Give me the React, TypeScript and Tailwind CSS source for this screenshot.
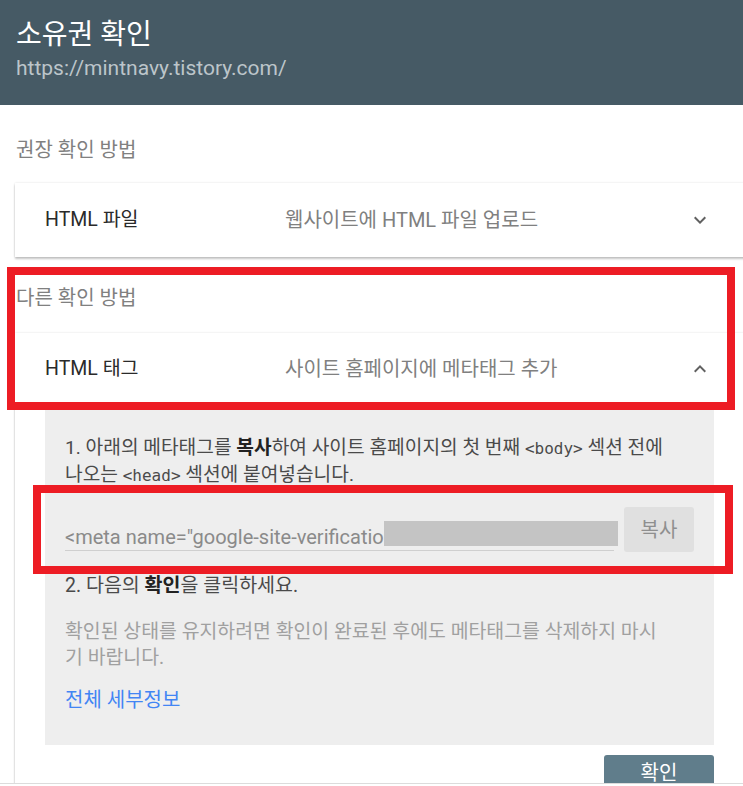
import React from 'react';

const font = { fontFamily: 'Roboto, "Noto Sans CJK KR", sans-serif' };

function Chevron({ up }: { up?: boolean }) {
  return (
    <svg width="24" height="24" viewBox="0 0 24 24" className={up ? 'rotate-180' : ''}>
      <path d="M7.41 8.59L12 13.17l4.59-4.58L18 10l-6 6-6-6 1.41-1.41z" fill="#616161" />
    </svg>
  );
}

function MethodHeader({ title, desc, open }: { title: string; desc: string; open?: boolean }) {
  return (
    <div className="flex items-center h-[72px] pl-[30px] pr-[33px]">
      <div className="w-[240px] text-[19.5px] leading-[26px] text-[#2a2a2a]">{title}</div>
      <div className="flex-1 text-[20px] leading-[26px] text-[#808080]">{desc}</div>
      <Chevron up={open} />
    </div>
  );
}

const Code = ({ children }: { children: React.ReactNode }) => (
  <span className="text-[16px]" style={{ fontFamily: '"DejaVu Sans Mono", monospace' }}>
    {children}
  </span>
);

export default function App() {
  return (
    <div className="relative w-[743px] h-[786px] overflow-hidden bg-white" style={font}>
      <div className="h-[783px] overflow-hidden">
        <header className="h-[105px] bg-[#465a65] px-4 pt-[18px]">
          <h1 className="text-[28px] leading-[34px] text-white">소유권 확인</h1>
          <p className="mt-[4px] text-[21px] leading-[24px] text-[#bcc5ca]">https://mintnavy.tistory.com/</p>
        </header>

        <p className="pt-[33px] pl-4 text-[20px] leading-[24px] text-[#808080]">권장 확인 방법</p>
        <div className="mt-[21px] ml-[15px] w-[730px] h-[74px] flex flex-col justify-center bg-white shadow-[0_2px_2px_rgba(0,0,0,0.22),0_0_2px_rgba(0,0,0,0.12)]">
          <MethodHeader title="HTML 파일" desc="웹사이트에 HTML 파일 업로드" />
        </div>

        <p className="mt-[29px] pl-4 text-[20px] leading-[24px] text-[#808080]">다른 확인 방법</p>
        <div className="mt-[23px] ml-[15px] w-[730px] h-[460px] bg-white shadow-[0_2px_2px_rgba(0,0,0,0.22),0_0_2px_rgba(0,0,0,0.12)]">
          <MethodHeader title="HTML 태그" desc="사이트 홈페이지에 메타태그 추가" open />
          <div className="ml-[30px] w-[669px] flex flex-col">
            <div className="bg-[#eeeeee] pl-5 pt-[30px] pb-[32px] text-[19.2px] leading-[26px]">
              <p className="text-[#4a4a4a] whitespace-nowrap">
                1. 아래의 메타태그를 <b className="text-[#222]">복사</b>하여 사이트 홈페이지의 첫 번째 <Code>&lt;body&gt;</Code> 섹션 전에
                <br />
                나오는 <Code>&lt;head&gt;</Code> 섹션에 붙여넣습니다.
              </p>
              <div className="mt-[18px] flex">
                <div className="w-[549px] h-[44px] pt-[18px] border-b border-[#cfcfcf] flex items-start">
                  <span className="text-[20px] leading-[24px] text-[#8a8a8a] whitespace-nowrap">
                    &lt;meta name="google-site-verificatio
                  </span>
                  <span className="shrink-0 mt-[-4px] w-[234px] h-[25px] bg-[#c4c4c4]" />
                </div>
                <button className="ml-[10px] w-[70px] h-[45px] rounded-[3px] bg-[#e0e0e0] text-[20px] text-[#8f8f8f]">
                  복사
                </button>
              </div>
              <p className="mt-[21px] text-[19.5px] text-[#4a4a4a]">
                2. 다음의 <b className="text-[#222]">확인</b>을 클릭하세요.
              </p>
              <p className="mt-[20px] text-[19.4px] text-[#a0a0a0] whitespace-nowrap">
                확인된 상태를 유지하려면 확인이 완료된 후에도 메타태그를 삭제하지 마시
                <br />기 바랍니다.
              </p>
              <p className="mt-[16px] text-[20px] text-[#4285f4]">전체 세부정보</p>
            </div>
            <button className="self-end mt-[10px] w-[110px] h-[38px] pb-[2px] rounded-[3px] bg-[#607d8b] text-[20px] leading-[24px] text-white">
              확인
            </button>
          </div>
        </div>
      </div>
      <div className="h-[3px] border-t border-[#dcdcdc]" />

      <div className="absolute left-[7px] top-[267px] w-[728px] h-[143px] border-[8px] border-[#ed1c24]" />
      <div className="absolute left-[33px] top-[485px] w-[700px] h-[89px] border-[8px] border-[#ed1c24]" />
    </div>
  );
}
